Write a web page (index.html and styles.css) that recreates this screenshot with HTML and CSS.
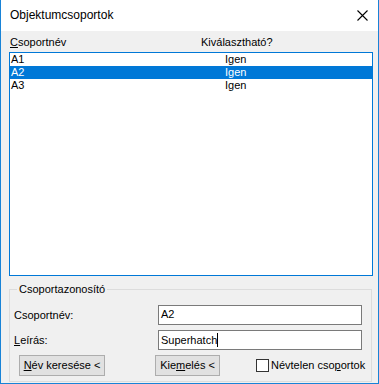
FILE: index.html
```html
<!DOCTYPE html>
<html lang="hu">
<head>
    <meta charset="UTF-8">
    <title>Objektumcsoportok</title>
    <link rel="stylesheet" href="styles.css">
</head>
<body>
    <div class="window">
        <div class="titlebar">
            <span class="title">Objektumcsoportok</span>
            <svg class="close" width="11" height="11" viewBox="0 0 11 11">
                <path d="M0.5 0.5 L10.5 10.5 M10.5 0.5 L0.5 10.5" stroke="#000" stroke-width="1.1" fill="none"/>
            </svg>
        </div>

        <div class="content">
            <div class="list-head">
                <span class="col-name"><u>C</u>soportnév</span>
                <span class="col-sel">Kiválasztható?</span>
            </div>
            <div class="listbox">
                <div class="row"><span class="col-name">A1</span><span class="col-sel">Igen</span></div>
                <div class="row selected"><span class="col-name">A2</span><span class="col-sel">Igen</span></div>
                <div class="row"><span class="col-name">A3</span><span class="col-sel">Igen</span></div>
            </div>

            <fieldset class="group">
                <legend>Csoportazonosító</legend>
                <div class="field">
                    <label class="field-label">Csoportnév:</label>
                    <div class="textbox">A2</div>
                </div>
                <div class="field">
                    <label class="field-label"><u>L</u>eírás:</label>
                    <div class="textbox">Superhatch<span class="caret"></span></div>
                </div>
                <div class="actions">
                    <button class="btn btn-find"><u>N</u>év keresése &lt;</button>
                    <button class="btn btn-mark">Kie<u>m</u>elés &lt;</button>
                    <label class="check"><span class="box"></span>Névtelen cso<u>p</u>ortok</label>
                </div>
            </fieldset>
        </div>
    </div>
</body>
</html>
```

FILE: styles.css
```css
* {
    margin: 0;
    padding: 0;
    box-sizing: border-box;
}

body {
    font-family: 'Liberation Sans', Arial, sans-serif;
    font-size: 11px;
    line-height: 13px;
    color: #000;
    background: #fff;
}

.window {
    width: 379px;
    height: 384px;
    border: 1px solid #1883d7;
    border-top: none;
    background: #f0f0f0;
    display: flex;
    flex-direction: column;
}

/* Title bar */
.titlebar {
    height: 31px;
    background: #fff;
    display: flex;
    align-items: center;
    justify-content: space-between;
    padding: 0 10px 0 9px;
}

.title {
    font-size: 12px;
}

.close {
    display: block;
    margin-top: -1px;
}

/* Main area */
.content {
    padding: 0 5px 0 8px;
}

.list-head {
    display: flex;
    padding: 5px 0 3px 1px;
    height: 21px;
}

.col-name {
    width: 191px;
}

.list-head .col-name {
    width: 191px;
}

.listbox {
    height: 224px;
    background: #fff;
    border: 1px solid #0078d7;
}

.row {
    display: flex;
    height: 13px;
    padding-left: 1px;
}

.row .col-name {
    width: 214px;
}

.row.selected {
    background: #0078d7;
    color: #fff;
}

/* Group box */
.group {
    margin-top: 7px;
    width: 363px;
    height: 99px;
    border: 1px solid #dcdcdc;
    padding: 0 0 0 4px;
}

.group legend {
    margin-left: 3px;
    padding: 0 2px;
    line-height: 13px;
}

.field {
    display: flex;
    align-items: center;
    height: 20px;
    margin-top: 9px;
}

.field + .field {
    margin-top: 5px;
}

.field-label {
    width: 144px;
}

.textbox {
    width: 204px;
    height: 20px;
    background: #fff;
    border: 1px solid #7a7a7a;
    padding: 2px 0 0 2px;
}

.caret {
    display: inline-block;
    width: 1px;
    height: 14px;
    background: #000;
    vertical-align: -3px;
}

.actions {
    display: flex;
    align-items: center;
    margin-top: 5px;
    height: 21px;
}

.btn {
    font: inherit;
    height: 21px;
    background: #e1e1e1;
    border: 1px solid #adadad;
    color: #000;
}

.btn-find {
    width: 86px;
    margin-left: 5px;
}

.btn-mark {
    width: 65px;
    margin-left: 50px;
}

.check {
    display: flex;
    align-items: center;
    margin-left: 36px;
}

.box {
    width: 13px;
    height: 13px;
    border: 1px solid #333;
    background: #fff;
    margin-right: 2px;
}
```
